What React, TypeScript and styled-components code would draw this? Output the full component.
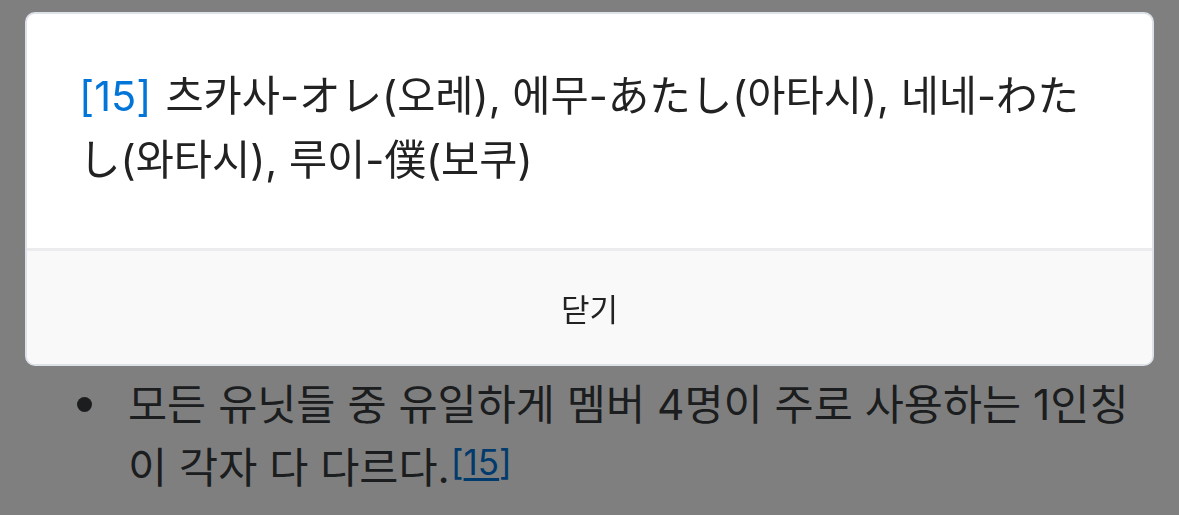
import React from "react";
import styled, { createGlobalStyle } from "styled-components";

const GlobalStyle = createGlobalStyle`
  html, body {
    margin: 0;
    padding: 0;
    background: #ffffff;
  }
  body {
    font-family: Inter, "Noto Sans CJK KR", "Noto Sans CJK JP", sans-serif;
    color: #373a3c;
  }
`;

const Article = styled.main`
  padding: 373px 40px 0 0;
  min-height: 515px;
  box-sizing: border-box;
`;

const List = styled.ul`
  list-style: none;
  margin: 0;
  padding: 0 0 0 77px;
`;

const Item = styled.li`
  display: flex;
  gap: 36px;
  font-size: 42.5px;
  line-height: 63px;
  color: #373a3c;
`;

const Bullet = styled.span`
  flex: none;
  width: 15px;
  height: 15px;
  margin-top: 24px;
  border-radius: 50%;
  background: #373a3c;
`;

const ItemText = styled.span`
  flex: 1;
`;

const FootRef = styled.sup`
  font-size: 35px;
  line-height: 0;
  vertical-align: 8px;
  margin-left: 1px;
  color: #0275d8;

  a {
    color: inherit;
    text-decoration: underline;
    text-underline-offset: 3px;
  }
`;

const Backdrop = styled.div`
  position: fixed;
  inset: 0;
  background: rgba(0, 0, 0, 0.5);
`;

const Dialog = styled.section`
  position: absolute;
  top: 12px;
  left: 25px;
  width: 1129px;
  box-sizing: border-box;
  background: #ffffff;
  border: 2px solid #dde2e9;
  border-radius: 10px;
  overflow: hidden;
`;

const DialogBody = styled.div`
  padding: 50px 40px 56px 52px;
  font-size: 41.5px;
  line-height: 64px;
  color: #222222;
`;

const RefLabel = styled.span`
  color: #0275d8;
  margin-right: 14px;
`;

const DialogFooter = styled.div`
  display: flex;
  align-items: center;
  justify-content: center;
  height: 113px;
  background: #f9f9fa;
  border-top: 3px solid #ececee;
`;

const CloseButton = styled.button`
  appearance: none;
  border: 0;
  background: transparent;
  padding: 0;
  font-family: inherit;
  font-size: 31px;
  color: #222222;
  cursor: pointer;
`;

export default function App() {
  return (
    <>
      <GlobalStyle />
      <Article>
        <List>
          <Item>
            <Bullet />
            <ItemText>
              모든 유닛들 중 유일하게 멤버 4명이 주로 사용하는 1인칭이 각자 다 다르다.
              <FootRef>
                [<a href="#fn-15">15</a>]
              </FootRef>
            </ItemText>
          </Item>
        </List>
      </Article>
      <Backdrop>
        <Dialog role="dialog">
          <DialogBody>
            <RefLabel>[15]</RefLabel>
            츠카사-オレ(오레), 에무-あたし(아타시), 네네-わたし(와타시), 루이-僕(보쿠)
          </DialogBody>
          <DialogFooter>
            <CloseButton type="button">닫기</CloseButton>
          </DialogFooter>
        </Dialog>
      </Backdrop>
    </>
  );
}
